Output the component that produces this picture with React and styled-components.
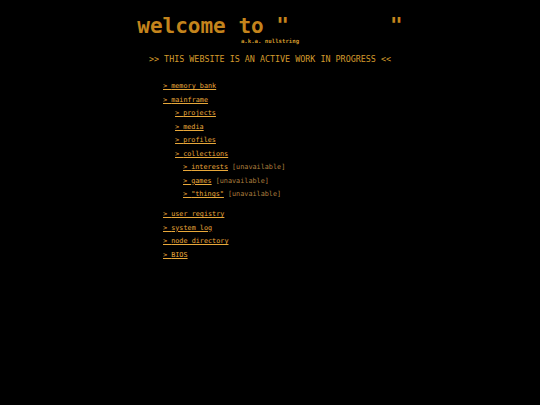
import styled, { createGlobalStyle } from 'styled-components'

const GlobalStyle = createGlobalStyle`
  html, body {
    margin: 0;
    background: #000;
  }
  body {
    font-family: "DejaVu Sans Mono", "Liberation Mono", monospace;
  }
`;

const tree = [
  { label: 'memory bank' },
  {
    label: 'mainframe',
    children: [
      { label: 'projects' },
      { label: 'media' },
      { label: 'profiles' },
      {
        label: 'collections',
        children: [
          { label: 'interests', off: true },
          { label: 'games', off: true },
          { label: '"things"', off: true },
        ],
      },
    ],
  },
];

const extra = ['user registry', 'system log', 'node directory', 'BIOS'];

const Branch = ({ items, level }) => (
  <List $level={level}>
    {items.map((item) => (
      <Item key={item.label}>
        <Row>
          <Link href="#">&gt; {item.label}</Link>
          {item.off && <Unavailable>[unavailable]</Unavailable>}
        </Row>
        {item.children && <Branch items={item.children} level={level + 1} />}
      </Item>
    ))}
  </List>
);

const App = () => {
  return (
    <Page>
      <GlobalStyle />
      <Header>
        <Title>welcome to "        "</Title>
        <Aka>a.k.a. nullstring</Aka>
        <Banner>&gt;&gt; THIS WEBSITE IS AN ACTIVE WORK IN PROGRESS &lt;&lt;</Banner>
      </Header>
      <Menu>
        <Branch items={tree} level={0} />
        <Spacer />
        <List $level={0}>
          {extra.map((label) => (
            <Item key={label}>
              <Row>
                <Link href="#">&gt; {label}</Link>
              </Row>
            </Item>
          ))}
        </List>
      </Menu>
    </Page>
  );
};

export default App;

const Page = styled.div`
  min-height: 405px;
  background: #000;
  padding-top: 12px;
  box-sizing: border-box;
`;

const Header = styled.header`
  text-align: center;
`;

const Title = styled.h1`
  margin: 0;
  font-size: 21px;
  line-height: 28px;
  font-weight: bold;
  color: #c4841c;
  white-space: pre;
`;

const Aka = styled.div`
  font-size: 5.7px;
  line-height: 8px;
  font-weight: bold;
  color: #d39a2c;
  margin-top: -3px;
`;

const Banner = styled.p`
  margin: 8px 0 0;
  font-size: 8.4px;
  line-height: 12px;
  color: #d39a2c;
`;

const Menu = styled.nav`
  width: 229px;
  margin: 15px auto 0;
  padding-left: 15px;
`;

const List = styled.ul`
  list-style: none;
  margin: 0;
  padding-left: ${(p) => (p.$level === 0 ? 0 : p.$level === 1 ? 12 : 8)}px;
`;

const Item = styled.li`
  margin: 0;
`;

const Row = styled.div`
  display: flex;
  gap: 4px;
  font-size: 6.8px;
  line-height: 13.5px;
  white-space: pre;
`;

const Link = styled.a`
  color: #e8a83a;
  text-decoration: underline;
`;

const Unavailable = styled.span`
  color: #ad7f3e;
`;

const Spacer = styled.div`
  height: 6.5px;
`;
